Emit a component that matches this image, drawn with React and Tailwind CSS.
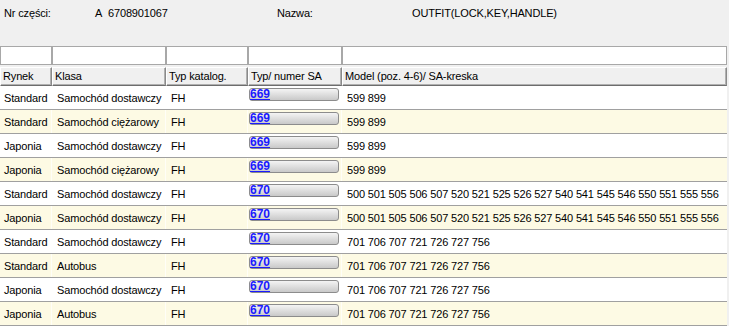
const rows = [
  ['Standard', 'Samochód dostawczy', 'FH', '669', '599 899'],
  ['Standard', 'Samochód ciężarowy', 'FH', '669', '599 899'],
  ['Japonia', 'Samochód dostawczy', 'FH', '669', '599 899'],
  ['Japonia', 'Samochód ciężarowy', 'FH', '669', '599 899'],
  ['Standard', 'Samochód dostawczy', 'FH', '670', '500 501 505 506 507 520 521 525 526 527 540 541 545 546 550 551 555 556'],
  ['Japonia', 'Samochód dostawczy', 'FH', '670', '500 501 505 506 507 520 521 525 526 527 540 541 545 546 550 551 555 556'],
  ['Standard', 'Samochód dostawczy', 'FH', '670', '701 706 707 721 726 727 756'],
  ['Standard', 'Autobus', 'FH', '670', '701 706 707 721 726 727 756'],
  ['Japonia', 'Samochód dostawczy', 'FH', '670', '701 706 707 721 726 727 756'],
  ['Japonia', 'Autobus', 'FH', '670', '701 706 707 721 726 727 756'],
];

const headers = ['Rynek', 'Klasa', 'Typ katalog.', 'Typ/ numer SA', 'Model (poz. 4-6)/ SA-kreska'];

const cols = 'grid grid-cols-[52px_114px_82px_94px_385px]';

export default function App() {
  return (
    <div className="h-[326px] w-[729px] overflow-hidden bg-[#f0f0f0] font-['Liberation_Sans',Arial,sans-serif] text-[11px] tracking-[-0.15px] text-black">
      {/* Nagłówek części */}
      <div className="flex h-[45px] items-start pt-[5px]">
        <span className="ml-[4px] w-[91px]">Nr części:</span>
        <span className="w-[182px]">A&nbsp;&nbsp;6708901067</span>
        <span className="w-[135px]">Nazwa:</span>
        <span>OUTFIT(LOCK,KEY,HANDLE)</span>
      </div>

      {/* Filtry */}
      <div className={`${cols} h-[22px] w-[727px] gap-0 pt-px`}>
        {headers.map((h) => (
          <div key={h} className="h-[19px] border border-[#a8a8a8] bg-white" />
        ))}
      </div>

      {/* Nagłówki kolumn */}
      <div className={`${cols} h-[19px] w-[727px]`}>
        {headers.map((h) => (
          <div
            key={h}
            className="flex items-center border-t border-l border-t-white border-l-white border-r border-b border-r-[#8a8a8a] border-b-[#6d6d6d] bg-[#f0f0f0] pl-[2px] shadow-[inset_-1px_-1px_0_#b0b0b0]"
          >
            {h}
          </div>
        ))}
      </div>

      {/* Wiersze */}
      <div className="w-[727px] bg-white">
        {rows.map((r, i) => (
          <div
            key={i}
            className={`${cols} h-[24px] border-b border-[#a0a0a0] ${i % 2 ? 'bg-[#fdfae4]' : 'bg-white'}`}
          >
            <div className="flex items-center border-r border-white/70 pl-[4px] pt-[2px]">{r[0]}</div>
            <div className="flex items-center border-r border-white/70 pl-[5px] pt-[2px]">{r[1]}</div>
            <div className="flex items-center border-r border-white/70 pl-[5px] pt-[2px]">{r[2]}</div>
            <div className="relative border-r border-white/70">
              <div className="absolute left-[1px] top-[2px] h-[13px] w-[90px] rounded-[3px] border border-[#8c8c8c] bg-gradient-to-b from-[#f4f4f4] to-[#c9c9c9]" />
              <a
                href="#"
                className="absolute left-[2px] top-px text-[12px] font-bold leading-[14px] tracking-normal text-[#1a1aff] underline"
              >
                {r[3]}
              </a>
            </div>
            <div className="flex items-center whitespace-nowrap pl-[5px] pt-[2px]">{r[4]}</div>
          </div>
        ))}
      </div>
    </div>
  );
}
